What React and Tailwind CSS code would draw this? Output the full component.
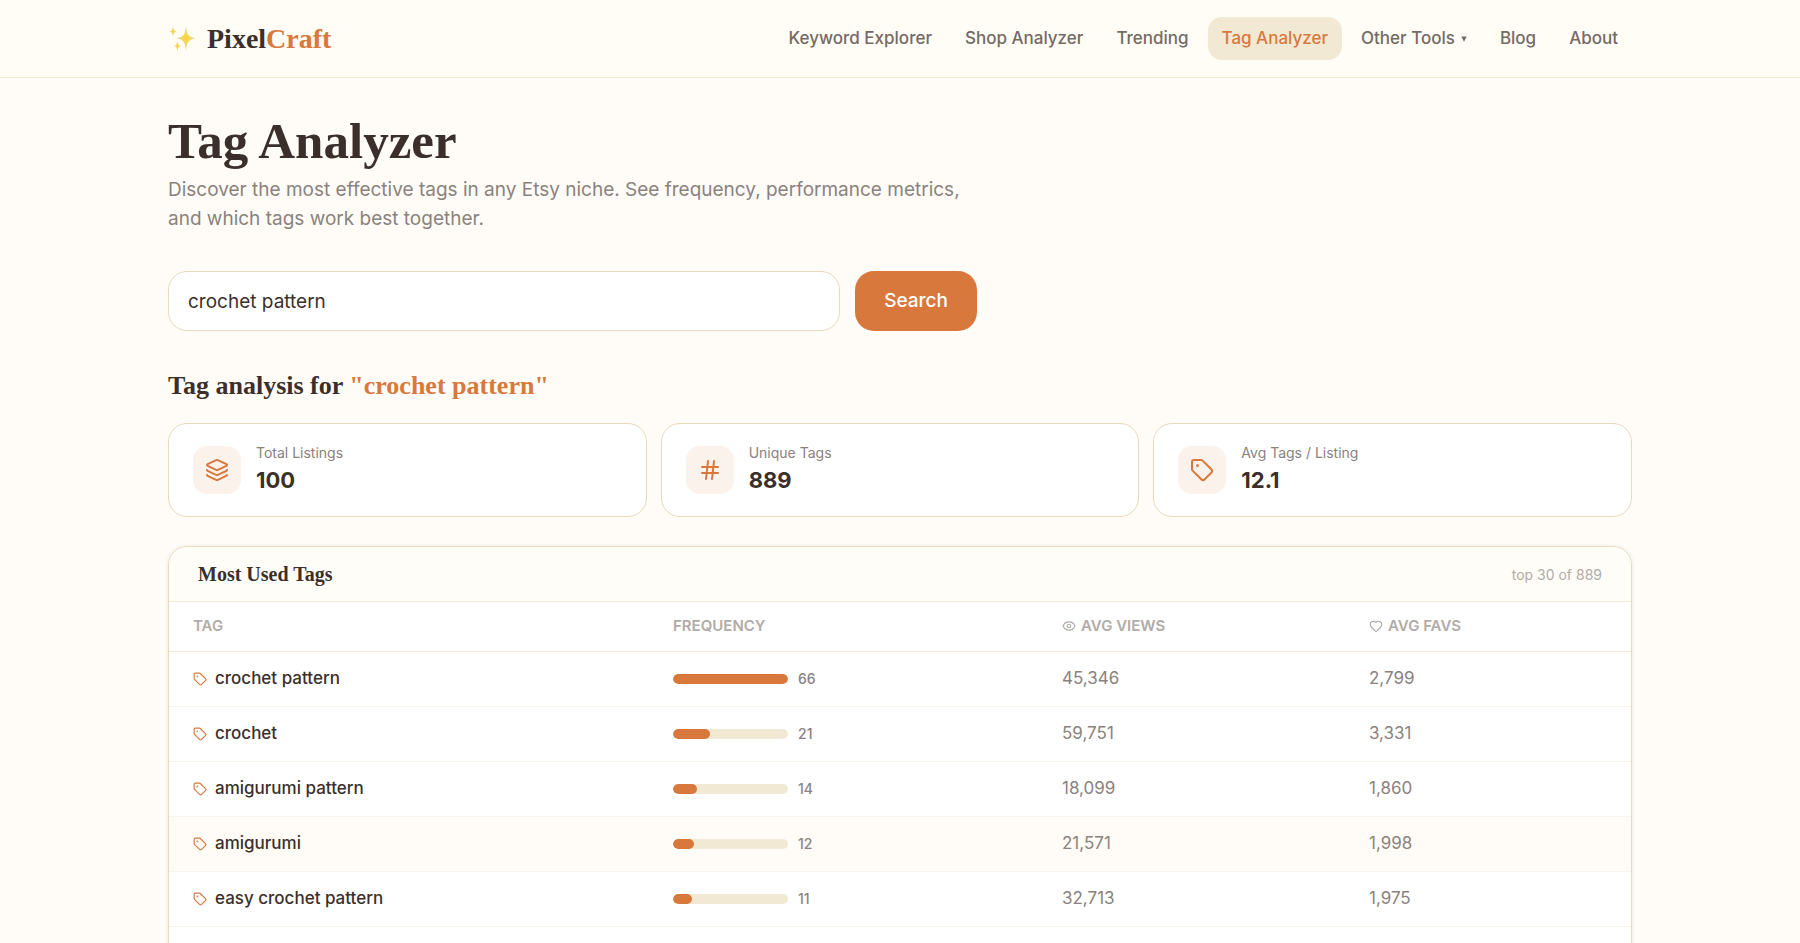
import React, { useState } from 'react'
import { Layers, Hash, Tag, Eye, Heart } from 'lucide-react'

const navItems = [
    { label: 'Keyword Explorer' },
    { label: 'Shop Analyzer' },
    { label: 'Trending' },
    { label: 'Tag Analyzer', active: true },
    { label: 'Other Tools', menu: true },
    { label: 'Blog' },
    { label: 'About' },
]

const stats = [
    { label: 'Total Listings', value: '100', icon: Layers },
    { label: 'Unique Tags', value: '889', icon: Hash },
    { label: 'Avg Tags / Listing', value: '12.1', icon: Tag },
]

const tags = [
    { name: 'crochet pattern', count: 66, views: '45,346', favs: '2,799' },
    { name: 'crochet', count: 21, views: '59,751', favs: '3,331' },
    { name: 'amigurumi pattern', count: 14, views: '18,099', favs: '1,860' },
    { name: 'amigurumi', count: 12, views: '21,571', favs: '1,998', highlighted: true },
    { name: 'easy crochet pattern', count: 11, views: '32,713', favs: '1,975' },
]

const maxCount = Math.max(...tags.map((tag) => tag.count))

const Sparkles = () => (
    <svg viewBox="0 0 28 28" className="h-7 w-7" aria-hidden="true">
        <defs>
            <radialGradient id="spark">
                <stop offset="0" stopColor="#fad22f" />
                <stop offset="0.4" stopColor="#f6da62" />
                <stop offset="1" stopColor="#efbd8c" />
            </radialGradient>
        </defs>
        <g fill="url(#spark)">
            <path d="M18 1.500C18.800 9 20.200 12 27.500 13.200C20.200 14.400 18.800 18 18 25.500C17.200 18 15.800 14.400 8.500 13.200C15.800 12 17.200 9 18 1.500Z" />
            <path d="M5 1C5.400 4.500 6 5.900 8.800 6.500C6 7.100 5.400 8.500 5 12C4.600 8.500 4 7.100 1.200 6.500C4 5.900 4.600 4.500 5 1Z" />
            <path d="M9.500 15.500C9.900 19 10.500 20.400 13.300 21C10.500 21.600 9.900 23 9.500 26.500C9.100 23 8.500 21.600 5.700 21C8.500 20.400 9.100 19 9.500 15.500Z" />
        </g>
    </svg>
)

const Header = () => (
    <header className="border-b border-[#f0e8d3] bg-[#fffdf6]">
        <div className="mx-auto flex h-[77px] max-w-[1464px] items-center justify-between">
            <a href="#" className="flex items-center gap-[11px]">
                <Sparkles />
                <span className="font-['Liberation_Serif',serif] text-[28px] leading-8 font-bold">
                    Pixel<span className="text-[#d9783d]">Craft</span>
                </span>
            </a>
            <nav className="flex items-center gap-[5px]">
                {navItems.map((item) => {
                    const style = item.active
                        ? 'bg-[#f2e9d5] text-[#d9783d]'
                        : 'text-[#746a66]'
                    if (item.menu) {
                        return (
                            <button key={item.label} type="button" className={`flex h-[43px] items-center gap-[6px] rounded-[14px] px-[14px] text-[17px] font-medium ${style}`}>
                                {item.label}
                                <svg viewBox="0 0 6 6" className="h-[6px] w-[6px]" aria-hidden="true">
                                    <path d="M0.300 0.500H5.700L3 5.800Z" fill="currentColor" />
                                </svg>
                            </button>
                        )
                    }
                    return (
                        <a key={item.label} href="#" className={`flex h-[43px] items-center rounded-[14px] px-[14px] text-[17px] font-medium ${style}`}>
                            {item.label}
                        </a>
                    )
                })}
            </nav>
        </div>
    </header>
)

const StatCard = ({ label, value, icon: Icon }) => (
    <div className="flex items-center gap-[15px] rounded-[19px] border border-[#e8dabb] bg-white px-6 py-[19px]">
        <div className="flex h-12 w-12 items-center justify-center rounded-[14px] bg-[#fcf2ec] text-[#d9783d]">
            <Icon size={24} strokeWidth={2} />
        </div>
        <div>
            <p className="text-[14px] leading-5 text-[#8a827e]">{label}</p>
            <p className="text-[22px] leading-[34px] font-bold">{value}</p>
        </div>
    </div>
)

const TagTable = () => (
    <section className="mt-[29px] overflow-hidden rounded-[19px] border border-[#e8dabb] bg-white pb-14 shadow-[0_1px_4px_rgba(61,47,42,0.12)]">
        <div className="flex h-[55px] items-center justify-between border-b border-[#f2e9d5] bg-[#fffdf8] px-[29px]">
            <h3 className="font-['Liberation_Serif',serif] text-[20px] leading-6 font-bold">Most Used Tags</h3>
            <span className="text-[14px] text-[#b1aba8]">top 30 of 889</span>
        </div>
        <table className="w-full table-fixed text-left">
            <colgroup>
                <col className="w-[480px]" />
                <col className="w-[389px]" />
                <col className="w-[307px]" />
                <col className="w-[286px]" />
            </colgroup>
            <thead>
                <tr className="h-[49px] border-b border-[#f2e9d5] text-[15px] text-[#b1aba8]">
                    <th className="px-6 font-semibold">TAG</th>
                    <th className="px-6 font-semibold">FREQUENCY</th>
                    <th className="px-6 font-semibold">
                        <span className="flex items-center gap-[5px]">
                            <Eye size={14} />
                            AVG VIEWS
                        </span>
                    </th>
                    <th className="px-6 font-semibold">
                        <span className="flex items-center gap-[5px]">
                            <Heart size={14} />
                            AVG FAVS
                        </span>
                    </th>
                </tr>
            </thead>
            <tbody>
                {tags.map((tag) => (
                    <tr key={tag.name} className={`h-[55px] border-b border-[#f9f4e9] text-[17px] ${tag.highlighted ? 'bg-[#fffcf7]' : ''}`}>
                        <td className="px-6">
                            <span className="flex items-center gap-2 font-medium">
                                <Tag size={14} className="text-[#d9783d]" />
                                {tag.name}
                            </span>
                        </td>
                        <td className="px-6">
                            <div className="flex items-center gap-[10px]">
                                <div className="h-[10px] w-[115px] overflow-hidden rounded-full bg-[#f2e9d5]">
                                    <div className="h-full rounded-full bg-[#d9783d]" style={{ width: `${(tag.count / maxCount) * 100}%` }}></div>
                                </div>
                                <span className="text-[14px] font-medium text-[#8a827e]">{tag.count}</span>
                            </div>
                        </td>
                        <td className="px-6 text-[#8a827e]">{tag.views}</td>
                        <td className="px-6 text-[#8a827e]">{tag.favs}</td>
                    </tr>
                ))}
            </tbody>
        </table>
    </section>
)

const App = () => {
    const [query, setQuery] = useState('crochet pattern')

    return (
        <div className="h-screen overflow-hidden bg-[#fffcf8] font-['Inter',sans-serif] text-[#3b2f2b]">
            <Header />
            <main className="mx-auto max-w-[1464px] pt-[38px]">
                <h1 className="font-['Liberation_Serif',serif] text-[51px] leading-[50px] font-bold">Tag Analyzer</h1>
                <p className="mt-[9px] max-w-[820px] text-[19px] leading-[29px] text-[#8a827e]">
                    Discover the most effective tags in any Etsy niche. See frequency, performance metrics, and which tags work best together.
                </p>

                <form className="mt-[38px] flex max-w-[809px] gap-[15px]" onSubmit={(e) => e.preventDefault()}>
                    <input
                        type="text"
                        aria-label="Search tags"
                        value={query}
                        onChange={(e) => setQuery(e.target.value)}
                        className="h-[60px] min-w-0 flex-1 rounded-[19px] border border-[#e8dabb] bg-white px-[19px] text-[19px] outline-none"
                    />
                    <button type="submit" className="h-[60px] rounded-[19px] bg-[#d9783d] px-[29px] text-[19px] font-medium text-white">
                        Search
                    </button>
                </form>

                <h2 className="mt-[38px] font-['Liberation_Serif',serif] text-[26px] leading-[34px] font-bold">
                    Tag analysis for <span className="text-[#d9783d]">"crochet pattern"</span>
                </h2>

                <div className="mt-5 grid grid-cols-3 gap-[14px]">
                    {stats.map((stat) => (
                        <StatCard key={stat.label} {...stat} />
                    ))}
                </div>

                <TagTable />
            </main>
        </div>
    )
}

export default App
